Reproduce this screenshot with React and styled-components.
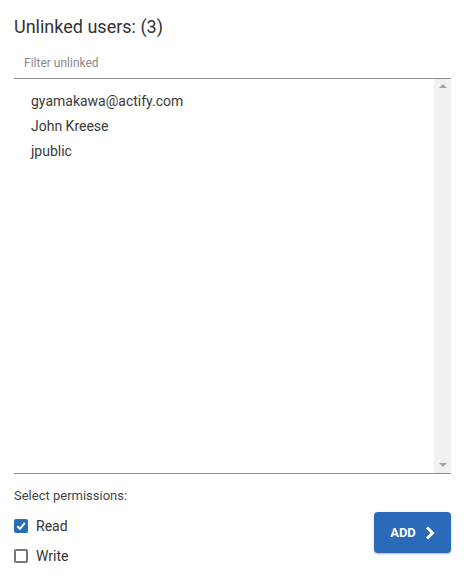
import React, { useState } from 'react';
import styled, { createGlobalStyle } from 'styled-components';

const GlobalStyle = createGlobalStyle`
  body {
    margin: 0;
    background: #fff;
    font-family: Roboto, "Liberation Sans", sans-serif;
  }
`;

const users = ['gyamakawa@actify.com', 'John Kreese', 'jpublic'];

const App = () => {
  const [perms, setPerms] = useState({ read: true, write: false });
  const toggle = (key) => setPerms((p) => ({ ...p, [key]: !p[key] }));

  return (
    <Panel>
      <GlobalStyle />
      <Title>Unlinked users: ({users.length})</Title>
      <FilterInput placeholder="Filter unlinked" />
      <ListBox>
        <Items>
          {users.map((u) => (
            <Item key={u}>{u}</Item>
          ))}
        </Items>
        <Scrollbar>
          <Arrow dir="up" />
          <Arrow dir="down" />
        </Scrollbar>
      </ListBox>
      <Footer>
        <Permissions>
          <Label>Select permissions:</Label>
          <CheckRow onClick={() => toggle('read')}>
            <Box checked={perms.read}>
              {perms.read && (
                <svg width="10" height="10" viewBox="0 0 10 10">
                  <path d="M1.3 5.2 L4 7.8 L8.8 1.8" fill="none" stroke="#fff" strokeWidth="1.9" />
                </svg>
              )}
            </Box>
            Read
          </CheckRow>
          <CheckRow onClick={() => toggle('write')}>
            <Box checked={perms.write}>
              {perms.write && (
                <svg width="10" height="10" viewBox="0 0 10 10">
                  <path d="M1.3 5.2 L4 7.8 L8.8 1.8" fill="none" stroke="#fff" strokeWidth="1.9" />
                </svg>
              )}
            </Box>
            Write
          </CheckRow>
        </Permissions>
        <AddButton>
          ADD
          <svg width="10" height="14" viewBox="0 0 10 14">
            <path d="M2 1.5 L7.5 7 L2 12.5" fill="none" stroke="#fff" strokeWidth="3" />
          </svg>
        </AddButton>
      </Footer>
    </Panel>
  );
};

const Panel = styled.div`
  padding: 15px 16px 0 14px;
  width: 437px;
  color: #333;
`;

const Title = styled.div`
  font-size: 18px;
  line-height: 24px;
  color: #333;
`;

const FilterInput = styled.input`
  display: block;
  box-sizing: border-box;
  width: 100%;
  height: 40px;
  padding: 8px 10px 0;
  border: none;
  border-bottom: 1px solid #8e8e8e;
  outline: none;
  font-family: Roboto, "Liberation Sans", sans-serif;
  font-size: 12px;
  color: #333;
  &::placeholder {
    color: #8a8a8a;
  }
`;

const ListBox = styled.div`
  display: flex;
  height: 394px;
  border-bottom: 1px solid #8e8e8e;
`;

const Items = styled.div`
  flex: 1;
  padding: 10px 17px 0;
`;

const Item = styled.div`
  font-size: 14px;
  line-height: 25px;
  color: #3a3a3a;
`;

const Scrollbar = styled.div`
  width: 17px;
  background: #f1f1f1;
  display: flex;
  flex-direction: column;
  justify-content: space-between;
  align-items: center;
  padding: 5px 0 6px;
  box-sizing: border-box;
`;

const Arrow = styled.div`
  width: 0;
  height: 0;
  border-left: 4px solid transparent;
  border-right: 4px solid transparent;
  ${(p) =>
    p.dir === 'up'
      ? 'border-bottom: 4px solid #a3a3a3;'
      : 'border-top: 4px solid #a3a3a3;'}
`;

const Footer = styled.div`
  display: flex;
  justify-content: space-between;
`;

const Permissions = styled.div`
  padding-top: 14px;
`;

const Label = styled.div`
  font-size: 13px;
  line-height: 16px;
  color: #444;
  margin-bottom: 7px;
`;

const CheckRow = styled.label`
  display: flex;
  align-items: center;
  gap: 8px;
  height: 30px;
  font-size: 14px;
  color: #333;
  cursor: pointer;
`;

const Box = styled.span`
  box-sizing: border-box;
  width: 14px;
  height: 14px;
  border-radius: 2px;
  display: flex;
  align-items: center;
  justify-content: center;
  background: ${(p) => (p.checked ? '#2a6ebb' : '#fff')};
  border: ${(p) => (p.checked ? 'none' : '2px solid #777')};
`;

const AddButton = styled.button`
  align-self: flex-end;
  margin-bottom: 18px;
  width: 77px;
  height: 41px;
  display: flex;
  align-items: center;
  justify-content: center;
  gap: 9px;
  background: #2a6ab9;
  border: none;
  border-radius: 4px;
  box-shadow: 0 1px 2px rgba(0, 0, 0, 0.3);
  color: #fff;
  font-family: Roboto, "Liberation Sans", sans-serif;
  font-weight: bold;
  font-size: 13px;
  cursor: pointer;
`;

export default App;
